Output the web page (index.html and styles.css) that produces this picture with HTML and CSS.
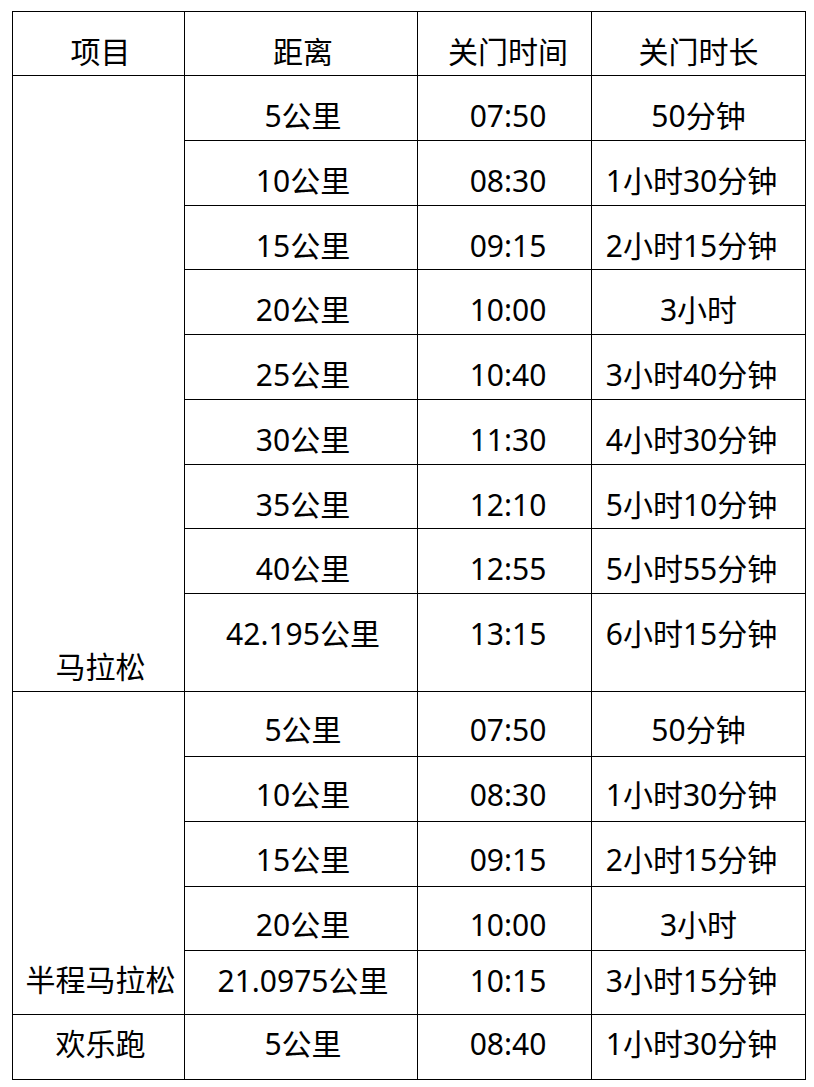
FILE: index.html
```html
<!DOCTYPE html>
<html lang="zh-CN">
<head>
<meta charset="utf-8">
<title>关门时间</title>
<link rel="stylesheet" href="styles.css">
</head>
<body>
<div class="sheet">
  <div class="cell c1 r-head">项目</div>
  <div class="cell c2 r-head">距离</div>
  <div class="cell c3 r-head">关门时间</div>
  <div class="cell c4 r-head">关门时长</div>

  <div class="cell c1 merge-full">马拉松</div>
  <div class="cell c2 r-full">5公里</div><div class="cell c3 r-full">07:50</div><div class="cell c4 r-full">50分钟</div>
  <div class="cell c2 r-full">10公里</div><div class="cell c3 r-full">08:30</div><div class="cell c4 r-full long">1小时30分钟</div>
  <div class="cell c2 r-full">15公里</div><div class="cell c3 r-full">09:15</div><div class="cell c4 r-full long">2小时15分钟</div>
  <div class="cell c2 r-full">20公里</div><div class="cell c3 r-full">10:00</div><div class="cell c4 r-full">3小时</div>
  <div class="cell c2 r-full">25公里</div><div class="cell c3 r-full">10:40</div><div class="cell c4 r-full long">3小时40分钟</div>
  <div class="cell c2 r-full">30公里</div><div class="cell c3 r-full">11:30</div><div class="cell c4 r-full long">4小时30分钟</div>
  <div class="cell c2 r-full">35公里</div><div class="cell c3 r-full">12:10</div><div class="cell c4 r-full long">5小时10分钟</div>
  <div class="cell c2 r-full">40公里</div><div class="cell c3 r-full">12:55</div><div class="cell c4 r-full long">5小时55分钟</div>
  <div class="cell c2 r-full">42.195公里</div><div class="cell c3 r-full">13:15</div><div class="cell c4 r-full long">6小时15分钟</div>

  <div class="cell c1 merge-half">半程马拉松</div>
  <div class="cell c2 r-half">5公里</div><div class="cell c3 r-half">07:50</div><div class="cell c4 r-half">50分钟</div>
  <div class="cell c2 r-half">10公里</div><div class="cell c3 r-half">08:30</div><div class="cell c4 r-half long">1小时30分钟</div>
  <div class="cell c2 r-half">15公里</div><div class="cell c3 r-half">09:15</div><div class="cell c4 r-half long">2小时15分钟</div>
  <div class="cell c2 r-half">20公里</div><div class="cell c3 r-half">10:00</div><div class="cell c4 r-half">3小时</div>
  <div class="cell c2 r-halfend">21.0975公里</div><div class="cell c3 r-halfend">10:15</div><div class="cell c4 r-halfend long">3小时15分钟</div>

  <div class="cell c1 r-fun">欢乐跑</div>
  <div class="cell c2 r-fun">5公里</div><div class="cell c3 r-fun">08:40</div><div class="cell c4 r-fun long">1小时30分钟</div>
</div>
</body>
</html>
```

FILE: styles.css
```css
html, body {
  margin: 0;
  padding: 0;
  background: #fff;
}

body {
  font-family: "Noto Sans", "Noto Sans CJK SC", sans-serif;
  color: #000;
}

.sheet {
  display: grid;
  grid-template-columns: 171px 232px 173px 213px;
  grid-template-rows: 63px 64px 64px 63px 64px 64px 64px 63px 64px 97px 64px 64px 64px 63px 63px 64px;
  gap: 1px;
  padding: 1px;
  background: #000;
  width: max-content;
  margin: 11px 0 0 12px;
}

.cell {
  background: #fff;
  font-size: 30px;
  line-height: 36px;
  text-align: center;
  white-space: nowrap;
  box-sizing: border-box;
}

.c1 { grid-column: 1; padding-left: 4px; }
.c2 { grid-column: 2; padding-left: 4px; }
.c3 { grid-column: 3; padding-left: 7px; }
.c4 { grid-column: 4; }
.c4.long { padding-right: 14px; }

.r-head { padding-top: 22px; }
.r-full { padding-top: 22px; }
.r-half { padding-top: 20px; }
.r-halfend { padding-top: 12px; }
.r-fun { padding-top: 11px; }

.merge-full {
  grid-row: 2 / span 9;
  display: flex;
  align-items: flex-end;
  justify-content: center;
  padding-bottom: 6px;
}

.merge-half {
  grid-row: 11 / span 5;
  display: flex;
  align-items: flex-end;
  justify-content: center;
  padding-bottom: 16px;
}
```
